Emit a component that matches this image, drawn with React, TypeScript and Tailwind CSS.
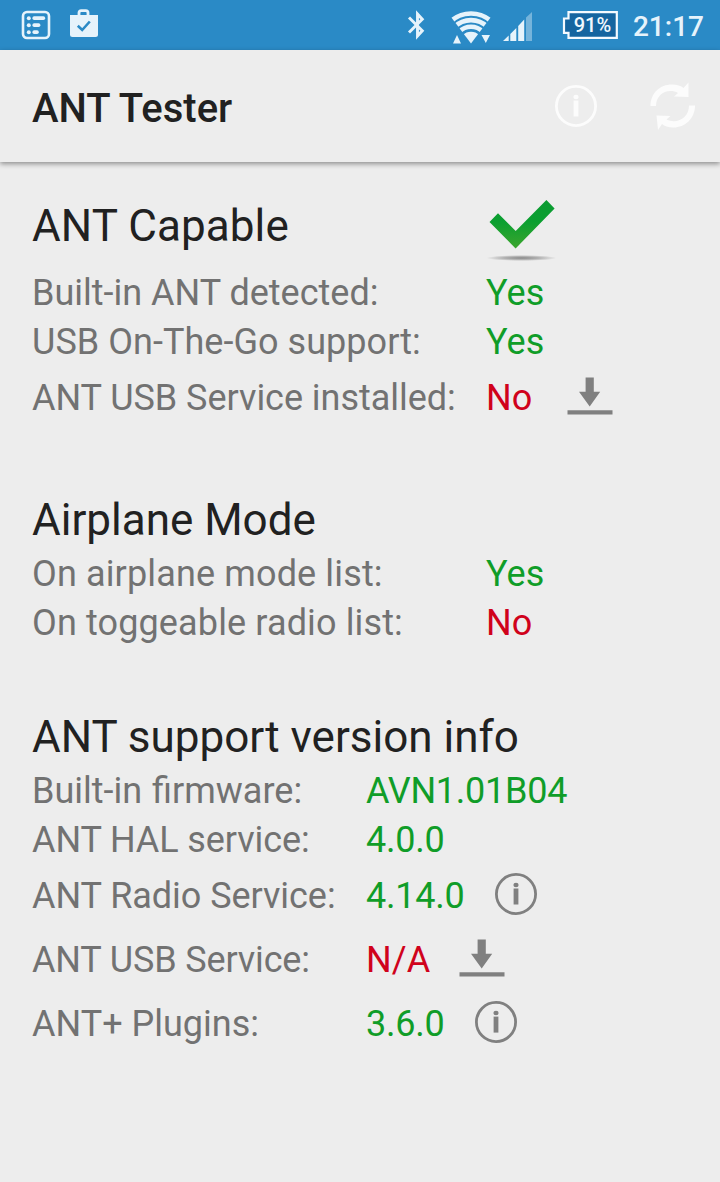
import React from "react";

type Row = {
  label: string;
  value: string;
  ok: boolean;
  action?: "info" | "download";
  tracking?: string;
};

const capable: Row[] = [
  { label: "Built-in ANT detected:", value: "Yes", ok: true },
  { label: "USB On-The-Go support:", value: "Yes", ok: true, tracking: "tracking-[0.04px]" },
  {
    label: "ANT USB Service installed:",
    value: "No",
    ok: false,
    action: "download",
    tracking: "tracking-[-0.04px]",
  },
];

const airplane: Row[] = [
  { label: "On airplane mode list:", value: "Yes", ok: true, tracking: "tracking-[0.14px]" },
  { label: "On toggeable radio list:", value: "No", ok: false, tracking: "tracking-[0.13px]" },
];

const versions: Row[] = [
  // word spacing instead of tracking keeps the fi ligature
  { label: "Built-in firmware:", value: "AVN1.01B04", ok: true, tracking: "[word-spacing:1px]" },
  { label: "ANT HAL service:", value: "4.0.0", ok: true, tracking: "tracking-[-0.1px]" },
  { label: "ANT Radio Service:", value: "4.14.0", ok: true, action: "info", tracking: "tracking-[-0.05px]" },
  { label: "ANT USB Service:", value: "N/A", ok: false, action: "download", tracking: "tracking-[-0.15px]" },
  { label: "ANT+ Plugins:", value: "3.6.0", ok: true, action: "info" },
];

function InfoIcon({ className }: { className?: string }) {
  return (
    <svg viewBox="0 0 42 42" className={`w-[42px] h-[42px] shrink-0 ${className}`}>
      <circle cx="21" cy="21" r="19.6" fill="none" stroke="currentColor" strokeWidth="2.8" />
      <ellipse cx="21" cy="12" rx="2.6" ry="2.2" fill="currentColor" />
      <path d="M18.6 15.6h4.8v16h-4.8z" fill="currentColor" />
    </svg>
  );
}

function DownloadIcon() {
  return (
    <svg viewBox="0 0 46 38" className="w-[46px] h-[38px] shrink-0 text-[#808080]" fill="currentColor">
      <path d="M18.6 0.5h8.2v14.3h6.4L22.7 29.5 12 14.8h6.6z" />
      <path d="M0.5 33.2h45v4.3h-45z" />
    </svg>
  );
}

function CheckMark() {
  return (
    <svg viewBox="0 0 70 64" className="mt-[10px] w-[70px] h-[64px]">
      <defs>
        <linearGradient id="check" x1="0" y1="0" x2="0" y2="1">
          <stop offset="0" stopColor="#0b9b32" />
          <stop offset="0.45" stopColor="#0b9f30" />
          <stop offset="1" stopColor="#3ba52d" />
        </linearGradient>
        <radialGradient id="shade">
          <stop offset="0" stopColor="#888" />
          <stop offset="0.5" stopColor="#888" stopOpacity="0.6" />
          <stop offset="1" stopColor="#888" stopOpacity="0" />
        </radialGradient>
      </defs>
      <path d="M3.5 22 12 13.2l17.7 17.8L60.4 0l8.2 8.4-39 40z" fill="url(#check)" />
      <ellipse cx="35.5" cy="58" rx="35" ry="3" fill="url(#shade)" />
    </svg>
  );
}

function StatusBar() {
  return (
    <div className="flex items-center h-[50px] bg-[#2a8ac6] text-[#e6f3fb]">
      <svg viewBox="0 0 30 30" className="ml-[21px] w-[30px] h-[30px]" fill="currentColor">
        <rect x="2" y="2" width="26" height="26" rx="4" fill="none" stroke="currentColor" strokeWidth="2.6" />
        <circle cx="7.8" cy="8.2" r="2" />
        <circle cx="7.8" cy="15.2" r="2" />
        <circle cx="7.8" cy="22.2" r="2" />
        <rect x="11.4" y="6.3" width="12.8" height="3.8" rx="1.8" />
        <rect x="11.4" y="13.3" width="8" height="3.8" rx="1.8" />
        <rect x="11.4" y="20.3" width="6.4" height="3.8" rx="1.8" />
      </svg>
      <svg viewBox="0 0 30 30" className="ml-[18px] mb-1 w-[30px] h-[30px]">
        <path d="M10 7.5V4.8Q10 2.6 12.2 2.6h4.6Q19 2.6 19 4.8v2.7" fill="none" stroke="currentColor" strokeWidth="2.8" />
        <path d="M1 7h28V26.5q0 2.5-2.5 2.5h-23Q1 29 1 26.5z" fill="currentColor" />
        <path d="m8.8 17.8 4.4 4.2 7.6-8.5" fill="none" stroke="#2a8ac6" strokeWidth="2.6" />
      </svg>
      <div className="ml-auto flex items-center">
        <svg viewBox="0 0 20 30" className="mr-[25px] w-5 h-[30px]">
          <path d="M3 7.5 16.3 20.8 11.5 26V4l4.8 5.2L3 22.5" fill="none" stroke="currentColor" strokeWidth="2.9" />
        </svg>
        <svg viewBox="0 0 40 34" className="mr-3 mt-[3px] w-10 h-[34px]">
          <defs>
            <clipPath id="fan">
              <path d="M20 33.5-1.500 5V-2h43v7z" />
            </clipPath>
          </defs>
          {/* signal rings cut to a wedge */}
          <g clipPath="url(#fan)" fill="none" stroke="currentColor" strokeWidth="4.6">
            <circle cx="20" cy="33.5" r="30" />
            <circle cx="20" cy="33.5" r="23.4" />
            <circle cx="20" cy="33.5" r="16.8" />
            <circle cx="20" cy="33.5" r="5.9" strokeWidth="11.8" />
          </g>
          <path d="m2 33.5 4-8.5 4 8.5zM30.5 25h8.5l-4.2 8z" fill="currentColor" />
        </svg>
        <svg viewBox="0 0 30 30" className="mr-[29px] mt-[3px] w-[30px] h-[30px]" fill="currentColor">
          <path d="M0 29 5.7 23.5v5.5zM7.3 22l6-6v13h-6zM15.2 14l6-6.5v21.5h-6z" />
          <path d="m23 5.5 6-5.5v29h-6z" opacity=".4" />
        </svg>
        <div className="relative mr-[15px] w-14 h-7">
          <svg viewBox="0 0 56 28" className="w-14 h-7">
            <path d="M6.5 1.2h48.3v25.6H6.5v-5H2V7.5h4.5z" fill="#1565a0" stroke="#f4faff" strokeWidth="2.2" />
          </svg>
          <span className="absolute inset-0 pl-[5px] text-center text-[20px] leading-[28px] font-medium text-[#f1f8fd]">91%</span>
        </div>
        <span className="mr-4 mt-[3px] text-[28px] leading-8 font-medium">21:17</span>
      </div>
    </div>
  );
}

function Rows({ rows, labelWidth }: { rows: Row[]; labelWidth: string }) {
  return (
    <>
      {rows.map((row) => (
        <div
          key={row.label}
          className={`flex items-center text-[36px] whitespace-nowrap ${row.action ? "h-16" : "h-[49px]"}`}
        >
          <span className={`shrink-0 text-[#727272] ${labelWidth} ${row.tracking ?? ""}`}>{row.label}</span>
          <span
            className={`${row.ok ? "text-[#109d28]" : "text-[#d0021b]"} ${
              row.value.includes(".") ? "tracking-[-0.25px]" : "tracking-[0.1px]"
            }`}
          >
            {row.value}
          </span>
          {row.action === "info" && <InfoIcon className="ml-[31px] mb-1 text-[#808080]" />}
          {row.action === "download" && (
            <span className={`mb-1 ${row.value === "N/A" ? "ml-[29px]" : "ml-[35px]"}`}>
              <DownloadIcon />
            </span>
          )}
        </div>
      ))}
    </>
  );
}

export default function App() {
  return (
    <div className="flex flex-col h-[1182px] w-[720px] overflow-hidden bg-[#ededed] font-[Roboto,sans-serif] text-[#212121]">
      <StatusBar />
      <header className="flex items-center h-28 shrink-0 pl-8 pr-6 shadow-[0_2px_5px_rgba(0,0,0,0.4)]">
        <h1 className="mt-1.5 text-[40px] leading-[48px] font-medium">ANT Tester</h1>
        <InfoIcon className="ml-auto mr-[53px] text-[#fcfcfc]" />
        <svg viewBox="0 0 46 50" className="w-[46px] h-[50px]" fill="#fcfcfc">
          <path d="M0.5 25C0.5 12 10 3.500 22 3.500c5.500 0 9 1.500 11.500 3.500L38.500 1.500v14.500l-14.500-.5 4-3.500C18 6.500 6 13 6 25z" />
          <path d="M45 24.500C45 37.500 35 46.500 23.500 46.500c-5.500 0-9-1.500-11.500-3.500L8 49 6.500 34.500l14 .5-4 3.500C27 43.500 39 37 39 24.500z" />
        </svg>
      </header>
      <main className="pl-8">
        <section className="pt-6">
          <div className="flex items-center h-[82px]">
            <h2 className="w-[454px] mb-0.5 text-[44px] leading-[52px] tracking-[0.1px]">ANT Capable</h2>
            <CheckMark />
          </div>
          <Rows rows={capable} labelWidth="w-[454px]" />
        </section>
        <section className="pt-[62px]">
          <h2 className="text-[44px] leading-[57px]">Airplane Mode</h2>
          <Rows rows={airplane} labelWidth="w-[454px]" />
        </section>
        <section className="pt-[62px]">
          <h2 className="text-[44px] leading-[57px]">ANT support version info</h2>
          <Rows rows={versions} labelWidth="w-[334px]" />
        </section>
      </main>
    </div>
  );
}
